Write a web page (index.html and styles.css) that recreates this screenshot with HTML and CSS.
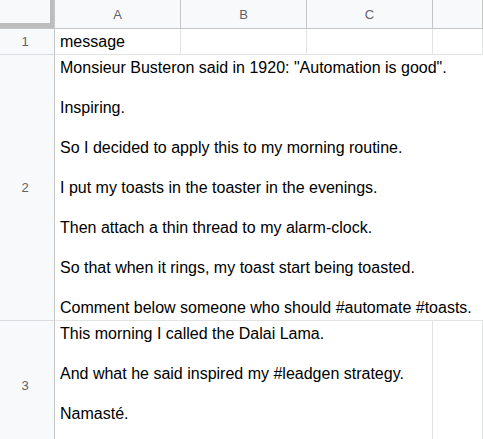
FILE: index.html
```html
<!DOCTYPE html>
<html lang="en">

<head>
    <meta charset="UTF-8">
    <meta name="viewport" content="width=device-width, initial-scale=1.0">
    <title>Sheet</title>
    <link rel="stylesheet" href="styles.css">
</head>

<body>
    <div class="sheet">
        <!-- header row -->
        <div class="corner"><div class="corner-freeze"></div></div>
        <div class="col-head">A</div>
        <div class="col-head">B</div>
        <div class="col-head">C</div>
        <div class="col-head"></div>

        <!-- row 1 -->
        <div class="row-head">1</div>
        <div class="cell">message</div>
        <div class="cell"></div>
        <div class="cell"></div>
        <div class="cell"></div>

        <!-- row 2: text spills over into B, C and D -->
        <div class="row-head">2</div>
        <div class="cell cell-span-4">
            <p>Monsieur Busteron said in 1920: "Automation is good".</p>
            <p>Inspiring.</p>
            <p>So I decided to apply this to my morning routine.</p>
            <p>I put my toasts in the toaster in the evenings.</p>
            <p>Then attach a thin thread to my alarm-clock.</p>
            <p>So that when it rings, my toast start being toasted.</p>
            <p>Comment below someone who should #automate #toasts.</p>
        </div>

        <!-- row 3 -->
        <div class="row-head">3</div>
        <div class="cell cell-span-3 cell-top">
            <p>This morning I called the Dalai Lama.</p>
            <p>And what he said inspired my #leadgen strategy.</p>
            <p>Namasté.</p>
        </div>
        <div class="cell"></div>
    </div>
</body>

</html>
```

FILE: styles.css
```css
body {
    margin: 0;
    background-color: #ffffff;
    font-family: "Liberation Sans", Arial, sans-serif;
    color: #000000;
}

.sheet {
    display: grid;
    grid-template-columns: 55px 126px 126px 126px 1fr;
    grid-template-rows: 29px 26px 266px 130px;
}

.sheet > div {
    box-sizing: border-box;
}

.corner {
    background-color: #f8f9fa;
    border-right: 1px solid #c4c7c5;
    border-bottom: 1px solid #c4c7c5;
}

.corner-freeze {
    box-sizing: border-box;
    height: 100%;
    border-right: 4px solid #bdbdbd;
    border-bottom: 5px solid #bdbdbd;
}

.col-head {
    display: flex;
    align-items: center;
    justify-content: center;
    background-color: #f8f9fa;
    border-right: 1px solid #c4c7c5;
    border-bottom: 1px solid #c4c7c5;
    color: #5f6368;
    font-size: 13px;
}

.row-head {
    display: flex;
    align-items: center;
    justify-content: center;
    background-color: #f8f9fa;
    border-right: 1px solid #c4c7c5;
    border-bottom: 1px solid #dadce0;
    color: #5f6368;
    font-size: 13px;
    padding-right: 4px;
}

.cell {
    display: flex;
    flex-direction: column;
    justify-content: flex-end;
    padding: 0 4px 2px 5px;
    border-right: 1px solid #e2e3e3;
    border-bottom: 1px solid #e2e3e3;
    font-size: 16px;
    line-height: 20px;
    white-space: nowrap;
    overflow: visible;
}

.cell p {
    margin: 0 0 20px;
}

.cell p:last-child {
    margin-bottom: 0;
}

.cell-span-4 {
    grid-column: span 4;
    border-right: none;
}

.cell-span-3 {
    grid-column: span 3;
}

.cell-top {
    justify-content: flex-start;
    padding-top: 3px;
}
```
